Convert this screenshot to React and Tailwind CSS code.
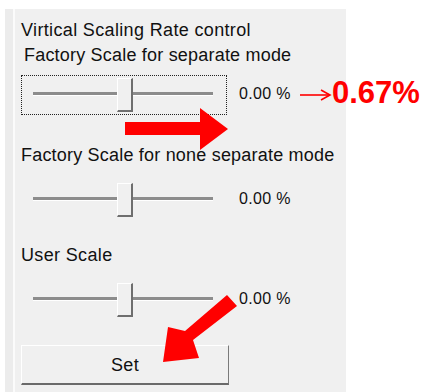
import React from "react";

const uiFont = { fontFamily: '"Liberation Sans", Arial, sans-serif' };

function Slider({ focused }) {
  return (
    <div className="flex items-start">
      <div
        className={`relative w-[206px] h-[40px] ${
          focused ? "border border-dotted border-[#222]" : "border border-transparent"
        }`}
      >
        {/* track */}
        <div className="absolute left-[11px] right-[13px] top-[16px] h-[4px] bg-[#8c8c8c] border-b border-white" />
        {/* thumb */}
        <div className="absolute left-[95px] top-[2px] w-[16px] h-[34px] bg-[#f0f0f0] border-t border-l border-white border-r-2 border-b-2 border-r-[#6e6e6e] border-b-[#6e6e6e]" />
      </div>
      <span className="ml-[12px] mt-[9px] text-[16px] leading-[20px] text-[#111]" style={uiFont}>
        0.00 %
      </span>
    </div>
  );
}

export default function App() {
  return (
    <div className="relative w-[425px] h-[392px] bg-white overflow-hidden">
      <div className="ml-[5px] pt-[9px] w-[341px] h-[392px] flex">
        <div className="flex w-full bg-[#f0f0f0]">
          {/* left edge of the pane */}
          <div className="w-[8px] h-full bg-[#ececec]" />
          <div className="w-[2px] h-full bg-[#fbfbfb]" />
          <div className="flex flex-col pl-[6px] pt-[9px] text-[18px] leading-[25px] tracking-[0.35px] text-[#111]" style={uiFont}>
            <div>Virtical Scaling Rate control</div>
            <div className="pl-[3px] tracking-[0.2px]">Factory Scale for separate mode</div>

            <div className="mt-[7px]">
              <Slider focused />
            </div>

            <div className="mt-[28px] tracking-[0.2px]">Factory Scale for none separate mode</div>
            <div className="mt-[12px]">
              <Slider />
            </div>

            <div className="mt-[23px]">User Scale</div>
            <div className="mt-[12px]">
              <Slider />
            </div>

            <button className="mt-[25px] w-[208px] h-[40px] bg-[#f0f0f0] border-t border-l border-white border-r border-b-2 border-r-[#7a7a7a] border-b-[#6a6a6a] text-[18px] leading-[24px] text-[#111] flex items-center justify-center">
              Set
            </button>
          </div>
        </div>
      </div>

      {/* annotation: value after change */}
      <div className="absolute left-[332px] top-[73px] text-[31px] leading-[40px] font-bold text-[#ff0000]" style={uiFont}>
        0.67%
      </div>

      {/* annotation arrows */}
      <svg className="absolute left-0 top-0" width="425" height="392" viewBox="0 0 425 392">
        <line x1="300" y1="95" x2="329" y2="95" stroke="#ff0000" strokeWidth="1.6" />
        <polyline points="321,90 330,95 321,100" fill="none" stroke="#ff0000" strokeWidth="1.6" />
        <polygon points="125,122 200,122 200,108 228,129 200,150 200,135 125,135" fill="#ff0000" />
        <polygon points="237,306 227,295 185,331 168,327 163,362 199,358 193,340" fill="#ff0000" />
      </svg>
    </div>
  );
}
